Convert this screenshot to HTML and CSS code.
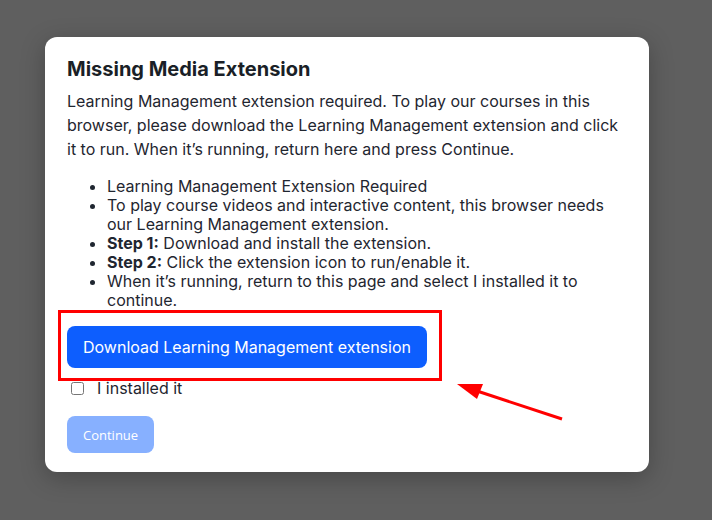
FILE: index.html
```html
<!DOCTYPE html>
<html lang="en">
<head>
<meta charset="utf-8">
<title>Missing Media Extension</title>
<link rel="stylesheet" href="styles.css">
</head>
<body>
<div class="dialog">
  <h2 class="title">Missing Media Extension</h2>
  <p class="intro">Learning Management extension required. To play our courses in this browser, please download the Learning Management extension and click it to run. When it’s running, return here and press Continue.</p>
  <ul class="steps">
    <li>Learning Management Extension Required</li>
    <li>To play course videos and interactive content, this browser needs our Learning Management extension.</li>
    <li><strong>Step 1:</strong> Download and install the extension.</li>
    <li><strong>Step 2:</strong> Click the extension icon to run/enable it.</li>
    <li>When it’s running, return to this page and select I installed it to continue.</li>
  </ul>
  <div class="download-wrap">
    <button class="btn-download" type="button">Download Learning Management extension</button>
    <span class="highlight"></span>
  </div>
  <label class="check-row"><input type="checkbox" class="check"> <span>I installed it</span></label>
  <button class="btn-continue" type="button" disabled>Continue</button>
</div>
<svg class="arrow" width="712" height="520" viewBox="0 0 712 520">
  <line x1="562" y1="419" x2="474" y2="390" stroke="#ff0000" stroke-width="3"/>
  <polygon points="457,384 483,384 477,399" fill="#ff0000"/>
</svg>
</body>
</html>
```

FILE: styles.css
```css
html, body {
  margin: 0;
  padding: 0;
}
body {
  background: #5f5f5f;
  width: 712px;
  height: 520px;
  overflow: hidden;
  position: relative;
  font-family: Inter, "Liberation Sans", sans-serif;
  color: #1f2630;
}
.dialog {
  margin: 37px 0 0 45px;
  width: 604px;
  height: 435px;
  box-sizing: border-box;
  background: #ffffff;
  border-radius: 12px;
  padding: 20px 22px;
  box-shadow: 0 6px 24px rgba(0, 0, 0, 0.25);
}
.title {
  margin: 0;
  font-size: 20px;
  line-height: 24px;
  font-weight: 700;
  color: #1a1f27;
}
.intro {
  margin: 8px 0 0;
  font-size: 16px;
  line-height: 24px;
}
.steps {
  margin: 16px 0 0;
  padding-left: 40px;
  font-size: 16px;
  line-height: 19px;
}
.steps strong {
  font-weight: 700;
}
.download-wrap {
  position: relative;
  display: inline-block;
  margin-top: 16px;
}
.btn-download {
  display: block;
  height: 42px;
  padding: 0 16px;
  white-space: nowrap;
  border: none;
  border-radius: 8px;
  background: #0d5efe;
  color: #ffffff;
  font-family: Inter, "Liberation Sans", sans-serif;
  font-size: 16px;
}
.highlight {
  position: absolute;
  left: -9px;
  top: -16px;
  right: -15px;
  bottom: -13px;
  border: 3px solid #ff0000;
  pointer-events: none;
}
.check-row {
  display: flex;
  align-items: center;
  margin-top: 11px;
  font-size: 16px;
  line-height: 19px;
  gap: 13px;
}
.check {
  margin: 0 0 0 4px;
  width: 13px;
  height: 13px;
}
.btn-continue {
  display: block;
  margin-top: 18px;
  height: 37px;
  padding: 0 16px;
  border: none;
  border-radius: 8px;
  background: #87b0ff;
  color: #ffffff;
  font-family: "Open Sans", "DejaVu Sans", sans-serif;
  font-size: 13px;
}
.arrow {
  position: absolute;
  left: 0;
  top: 0;
  pointer-events: none;
}
```
